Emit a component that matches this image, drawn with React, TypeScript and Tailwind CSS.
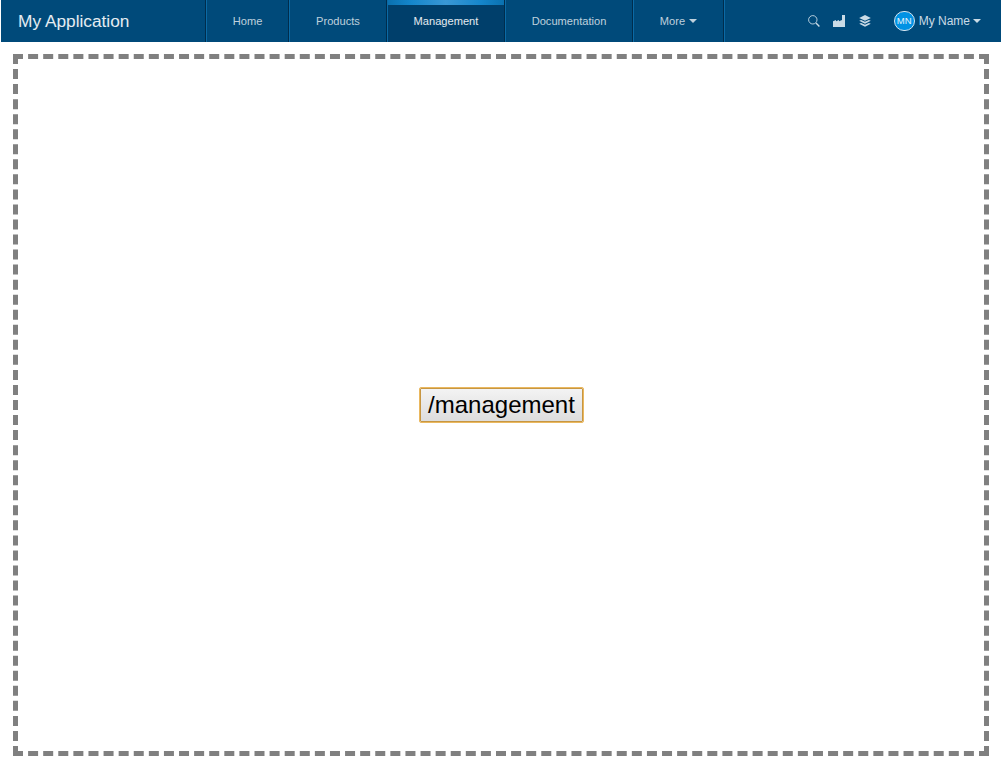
import React from "react";

type NavItem = { label: string; width: string; active?: boolean; more?: boolean };

const items: NavItem[] = [
  { label: "Home", width: "w-[83px]" },
  { label: "Products", width: "w-[98px]" },
  { label: "Management", width: "w-[118px]", active: true },
  { label: "Documentation", width: "w-[128px]" },
  { label: "More", width: "w-[91px]", more: true },
];

function Caret() {
  return (
    <svg width="8" height="4" viewBox="0 0 8 4" fill="currentColor">
      <path d="M0 0h8L4 4z" />
    </svg>
  );
}

function Tab({ label, width, active, more }: NavItem) {
  return (
    <a
      className={`${width} relative flex h-full items-center justify-center border-r border-l border-r-[#002d4d] border-l-[#0b6aa5] text-[11.1px] ${
        active ? "bg-[#003f6b] text-white/90" : "text-white/75"
      }`}
    >
      {active && (
        <span className="absolute top-0 right-0 left-0 h-[5px] bg-[linear-gradient(to_right,#0a71b0,#1586cb_20%,#3a98d5_50%,#1586cb_80%,#0a71b0)]" />
      )}
      <span>{label}</span>
      {more && (
        <span className="ml-1">
          <Caret />
        </span>
      )}
    </a>
  );
}

export default function App() {
  return (
    <div className="flex h-[768px] w-[1001px] flex-col bg-white pl-px font-['Liberation_Sans',Arial,sans-serif]">
      <header className="flex h-[42px] shrink-0 bg-[#004a7a]">
        <div className="flex w-[205px] items-center border-r border-[#002d4d] pt-px pl-[17px] text-[17.3px] text-white/90">
          My Application
        </div>
        <nav className="flex">
          {items.map((item) => (
            <Tab key={item.label} {...item} />
          ))}
        </nav>
        <div className="flex flex-1 items-center justify-end border-l border-[#0b6aa5] pr-5 text-[#cadbe6]">
          <svg width="12" height="12" viewBox="0 0 12 12" fill="none" stroke="currentColor">
            <circle cx="4.8" cy="4.8" r="4.2" strokeWidth="0.9" />
            <path d="M8 8l3.4 3.4" strokeWidth="1.4" />
          </svg>
          <svg className="ml-[13px]" width="12" height="12" viewBox="0 0 12 12" fill="currentColor">
            <path d="M0 12V6.2L3 5v1.2L6 5v1.2L9 5V0h3v12z" />
          </svg>
          <svg className="ml-[14px]" width="12" height="12" viewBox="0 0 12 12" fill="currentColor">
            <path d="M6 0l5.8 2.9L6 5.8.2 2.9z" />
            <path d="M2.1 4.9L6 6.8l3.9-1.9 1.9.9L6 8.7.2 5.8z" />
            <path d="M2.1 7.9L6 9.8l3.9-1.9 1.9.9L6 11.8.2 8.8z" />
          </svg>
          <span className="ml-[23px] flex h-5 w-[21px] items-center justify-center rounded-full border border-[#d5e5f0] bg-[#0092e4] text-[9.5px] text-white/90">
            MN
          </span>
          <span className="ml-1 text-[12px]">My Name</span>
          <span className="ml-[3px]">
            <Caret />
          </span>
        </div>
      </header>
      <main className="mx-3 mt-3 mb-3 flex flex-1 items-center justify-center border-[5px] border-dashed border-[#808080] pl-px">
        <button className="h-9 w-[165px] rounded-[2px] border border-[#eab85f] p-0">
          <span className="flex h-[34px] items-start justify-center rounded-[1px] border border-[#c79642] bg-linear-to-b from-[#f3f3f3] to-[#dddddd] text-[24px] leading-[31px] text-black">
            /management
          </span>
        </button>
      </main>
    </div>
  );
}
